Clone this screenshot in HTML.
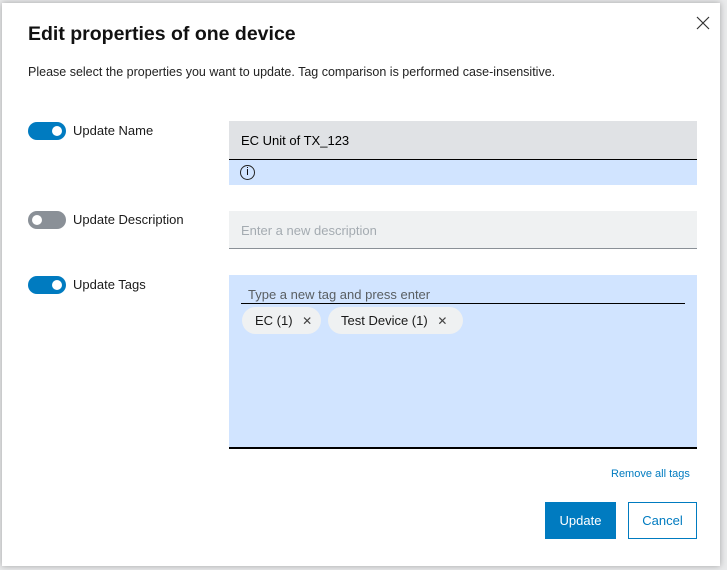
<!DOCTYPE html>
<html><head><style>
body{margin:0;width:727px;height:570px;background:#e9eaeb;font-family:"Liberation Sans",sans-serif;position:relative;overflow:hidden;color:#000}
.dlg{position:absolute;left:2px;top:3px;width:718px;height:563px;background:#fff;box-shadow:0 0 6px rgba(0,0,0,.3)}
.a{position:absolute}
.tg{position:absolute;left:28px;width:38px;height:18px;border-radius:9px}
.tg i{position:absolute;top:4px;width:10px;height:10px;border-radius:50%;background:#fff}
.lbl{position:absolute;left:73px;font-size:13px;color:#1a1a1a}
.chip{position:absolute;top:304px;height:27px;border-radius:14px;background:#eff1f2;font-size:13px;line-height:27px;padding-left:13px;box-sizing:border-box;color:#1a1a1a}
.chip span{color:#444;font-size:12px;font-weight:300}
</style></head><body>
<div class="dlg">
<svg class="a" style="left:694px;top:13px" width="14" height="14"><path d="M1 1L13 13M13 1L1 13" stroke="#333" stroke-width="1.2"/></svg>
<div class="a" style="left:26px;top:20px;font-size:19.5px;font-weight:bold;color:#111">Edit properties of one device</div>
<div class="a" style="left:26px;top:62px;font-size:12.5px;color:#222">Please select the properties you want to update. Tag comparison is performed case-insensitive.</div>

<div class="tg" style="top:119px;left:26px;background:#007bc0"><i style="left:24px"></i></div>
<div class="lbl" style="top:120px;left:71px">Update Name</div>
<div class="a" style="left:227px;top:118px;width:468px;height:38px;background:#e0e2e5;border-bottom:1px solid #000"></div>
<div class="a" style="left:239px;top:130px;font-size:13px">EC Unit of TX_123</div>
<div class="a" style="left:227px;top:157px;width:468px;height:25px;background:#d1e4ff"></div>
<div class="a" style="left:238px;top:162px;width:13px;height:13px;border:1px solid #222;border-radius:50%;font-size:11px;line-height:13px;text-align:center;box-sizing:content-box">i</div>

<div class="tg" style="top:208px;left:26px;background:#8a9097"><i style="left:4px"></i></div>
<div class="lbl" style="top:209px;left:71px">Update Description</div>
<div class="a" style="left:227px;top:208px;width:468px;height:37px;background:#eff1f2;border-bottom:1px solid #8a9097"></div>
<div class="a" style="left:239px;top:220px;font-size:13px;color:#a4abb1">Enter a new description</div>

<div class="tg" style="top:273px;left:26px;background:#007bc0"><i style="left:24px"></i></div>
<div class="lbl" style="top:274px;left:71px">Update Tags</div>
<div class="a" style="left:227px;top:272px;width:468px;height:172px;background:#d1e4ff;border-bottom:2px solid #000"></div>
<div class="a" style="left:246px;top:284px;font-size:13px;color:#595e62">Type a new tag and press enter</div>
<div class="a" style="left:239px;top:300px;width:444px;height:1px;background:#000"></div>
<div class="chip" style="left:240px;width:79px">EC (1) <span style="margin-left:6px">✕</span></div>
<div class="chip" style="left:326px;width:135px">Test Device (1) <span style="margin-left:6px">✕</span></div>

<div class="a" style="left:609px;top:465px;font-size:11px;color:#007bc0">Remove all tags</div>
<div class="a" style="left:543px;top:499px;width:71px;height:37px;background:#007bc0;color:#fff;font-size:13px;line-height:37px;text-align:center">Update</div>
<div class="a" style="left:626px;top:499px;width:67px;height:35px;border:1px solid #007bc0;color:#007bc0;font-size:13px;line-height:35px;text-align:center">Cancel</div>
</div>
</body></html>
